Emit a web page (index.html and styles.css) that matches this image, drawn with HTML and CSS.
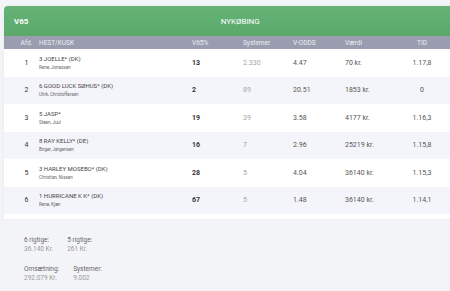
FILE: index.html
```html
<!DOCTYPE html>
<html lang="da">
<head>
<meta charset="utf-8">
<link rel="stylesheet" href="styles.css">
</head>
<body>
<div class="card">
  <div class="card-head">
    <span class="game">V65</span>
    <span class="track">NYKØBING</span>
  </div>
  <div class="row thead">
    <div class="c-afd">Afd.</div>
    <div class="c-horse">HEST/KUSK</div>
    <div class="c-pct">V65%</div>
    <div class="c-sys">Systemer</div>
    <div class="c-odds">V-ODDS</div>
    <div class="c-val">Værdi</div>
    <div class="c-tid">TID</div>
  </div>
  <div class="row">
    <div class="c-afd num">1</div>
    <div class="c-horse"><div class="horse">3 JOELLE* (DK)</div><div class="driver">Rene, Jonassen</div></div>
    <div class="c-pct pct">13</div>
    <div class="c-sys sys">2.330</div>
    <div class="c-odds">4.47</div>
    <div class="c-val">70 kr.</div>
    <div class="c-tid">1.17,8</div>
  </div>
  <div class="row alt">
    <div class="c-afd num">2</div>
    <div class="c-horse"><div class="horse">6 GOOD LUCK SØHUS* (DK)</div><div class="driver">Ulrik, Christoffersen</div></div>
    <div class="c-pct pct">2</div>
    <div class="c-sys sys">89</div>
    <div class="c-odds">20.51</div>
    <div class="c-val">1853 kr.</div>
    <div class="c-tid">0</div>
  </div>
  <div class="row">
    <div class="c-afd num">3</div>
    <div class="c-horse"><div class="horse">5 JASP*</div><div class="driver">Steen, Juul</div></div>
    <div class="c-pct pct">19</div>
    <div class="c-sys sys">39</div>
    <div class="c-odds">3.58</div>
    <div class="c-val">4177 kr.</div>
    <div class="c-tid">1.16,3</div>
  </div>
  <div class="row alt">
    <div class="c-afd num">4</div>
    <div class="c-horse"><div class="horse">8 RAY KELLY* (DE)</div><div class="driver">Birger, Jørgensen</div></div>
    <div class="c-pct pct">16</div>
    <div class="c-sys sys">7</div>
    <div class="c-odds">2.96</div>
    <div class="c-val">25219 kr.</div>
    <div class="c-tid">1.15,8</div>
  </div>
  <div class="row">
    <div class="c-afd num">5</div>
    <div class="c-horse"><div class="horse">3 HARLEY MOSEBO* (DK)</div><div class="driver">Christian, Nissen</div></div>
    <div class="c-pct pct">28</div>
    <div class="c-sys sys">5</div>
    <div class="c-odds">4.04</div>
    <div class="c-val">36140 kr.</div>
    <div class="c-tid">1.15,3</div>
  </div>
  <div class="row alt">
    <div class="c-afd num">6</div>
    <div class="c-horse"><div class="horse">1 HURRICANE K K* (DK)</div><div class="driver">Rene, Kjær</div></div>
    <div class="c-pct pct">67</div>
    <div class="c-sys sys">5</div>
    <div class="c-odds">1.48</div>
    <div class="c-val">36140 kr.</div>
    <div class="c-tid">1.14,1</div>
  </div>
</div>
<div class="stats">
  <div class="stat-line">
    <div class="stat"><div class="label">6 rigtige:</div><div class="value">36.140 Kr.</div></div>
    <div class="stat"><div class="label">5 rigtige:</div><div class="value">261 Kr.</div></div>
  </div>
  <div class="stat-line">
    <div class="stat"><div class="label">Omsætning:</div><div class="value">292.079 Kr.</div></div>
    <div class="stat"><div class="label">Systemer:</div><div class="value">9.002</div></div>
  </div>
</div>
</body>
</html>
```

FILE: styles.css
```css
html, body {
  margin: 0;
  padding: 0;
  overflow: hidden;
}
body {
  background: #f3f4f8;
  font-family: Roboto, "Liberation Sans", sans-serif;
  color: #444;
  width: 450px;
  height: 291px;
}
.card {
  margin: 6px 0 0 4px;
  width: 482px;
  background: #fff;
  border-radius: 4px 4px 0 0;
  box-shadow: 0 0 2px rgba(0,0,0,0.08);
  padding-bottom: 5px;
}
.card-head {
  height: 30px;
  background: linear-gradient(#66b276, #5aa96b);
  border-radius: 4px 4px 0 0;
  display: flex;
  align-items: center;
  color: #fff;
  padding-left: 10px;
}
.game {
  font-weight: 700;
  font-size: 8px;
}
.track {
  flex: 1;
  text-align: center;
  padding-right: 34px;
  font-size: 8px;
}
.row {
  display: grid;
  grid-template-columns: 35px 153px 51px 50px 52px 50px 54px 37px;
  align-items: center;
  height: 27.5px;
  font-size: 7px;
  color: #555;
}
.row.alt {
  background: #f4f5fa;
}
.row.thead {
  height: 13px;
  background: #9a9daf;
  color: #eceef4;
  font-size: 6.5px;
}
.c-afd {
  text-align: center;
  padding-left: 10px;
}
.c-tid {
  text-align: center;
}
.num {
  color: #333;
}
.horse {
  font-size: 6px;
  color: #444;
  line-height: 8px;
}
.driver {
  font-size: 4.5px;
  color: #666;
  line-height: 6px;
  margin-top: 2px;
}
.pct {
  font-weight: 700;
  color: #333;
}
.sys {
  color: #a5a5a5;
}
.stats {
  padding: 17px 0 0 24px;
  display: flex;
  flex-direction: column;
  gap: 11px;
}
.stat-line {
  display: flex;
  gap: 14px;
}
.label {
  font-size: 6.5px;
  color: #666;
  line-height: 9px;
}
.value {
  font-size: 6.5px;
  color: #9a9a9a;
  line-height: 9px;
}
```
